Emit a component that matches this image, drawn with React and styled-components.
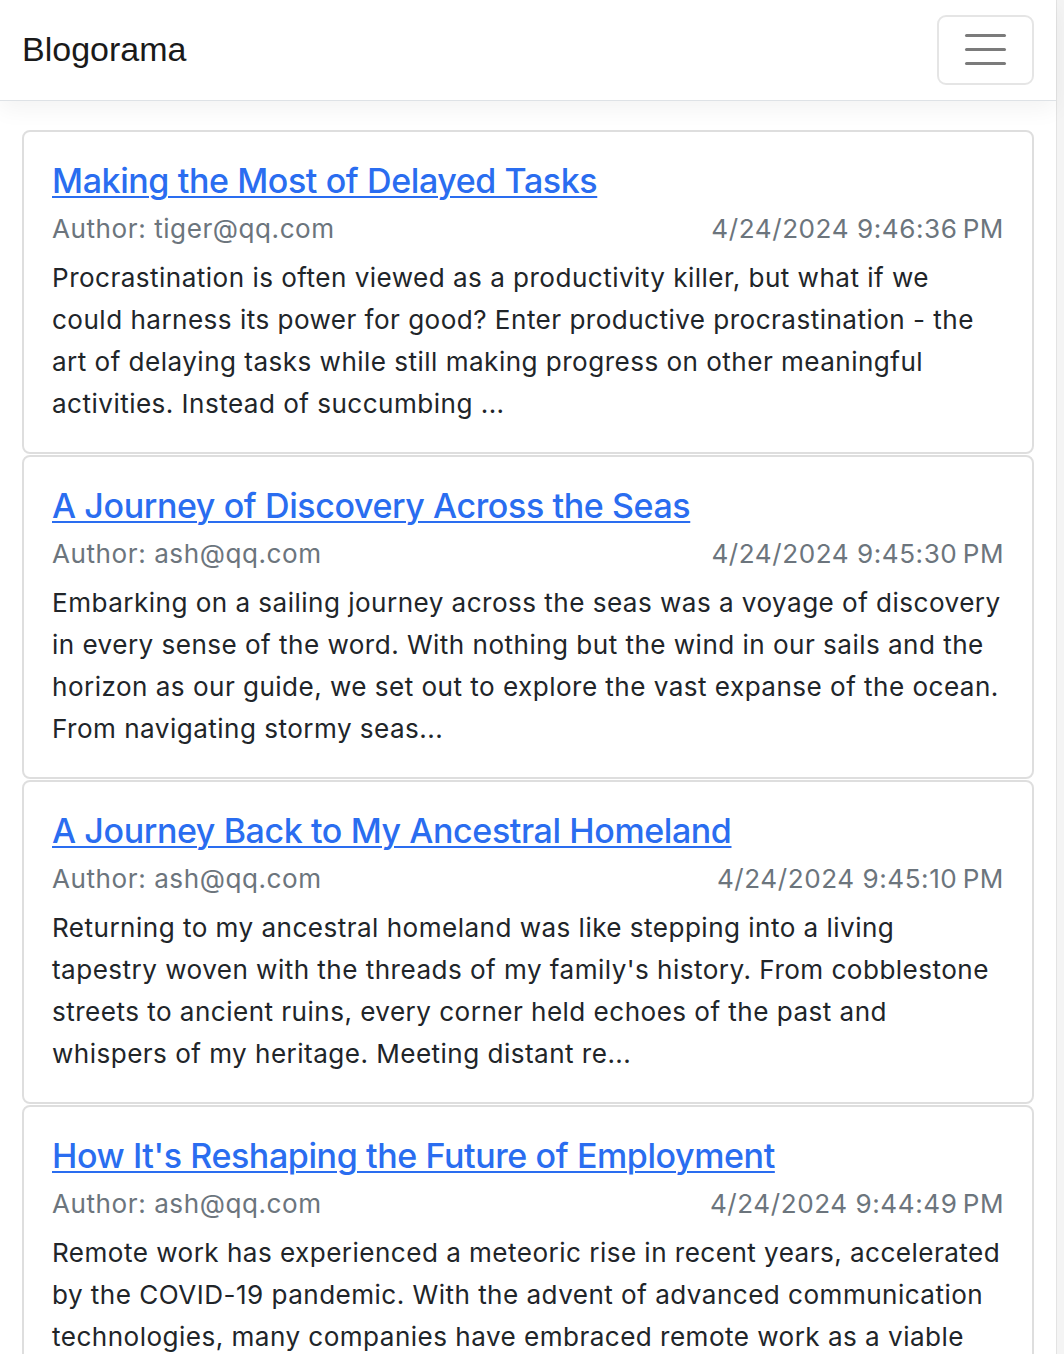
import React from "react";
import styled, {createGlobalStyle} from "styled-components";

const posts = [
  {
    id: 1,
    title: "Making the Most of Delayed Tasks",
    author: "tiger@qq.com",
    date: "4/24/2024 9:46:36\u202FPM",
    excerpt:
      "Procrastination is often viewed as a productivity killer, but what if we could harness its power for good? Enter productive procrastination - the art of delaying tasks while still making progress on other meaningful activities. Instead of succumbing ...",
  },
  {
    id: 2,
    title: "A Journey of Discovery Across the Seas",
    author: "ash@qq.com",
    date: "4/24/2024 9:45:30\u202FPM",
    excerpt:
      "Embarking on a sailing journey across the seas was a voyage of discovery in every sense of the word. With nothing but the wind in our sails and the horizon as our guide, we set out to explore the vast expanse of the ocean. From navigating stormy seas...",
  },
  {
    id: 3,
    title: "A Journey Back to My Ancestral Homeland",
    author: "ash@qq.com",
    date: "4/24/2024 9:45:10\u202FPM",
    excerpt:
      "Returning to my ancestral homeland was like stepping into a living tapestry woven with the threads of my family's history. From cobblestone streets to ancient ruins, every corner held echoes of the past and whispers of my heritage. Meeting distant re...",
  },
  {
    id: 4,
    title: "How It's Reshaping the Future of Employment",
    author: "ash@qq.com",
    date: "4/24/2024 9:44:49\u202FPM",
    excerpt:
      "Remote work has experienced a meteoric rise in recent years, accelerated by the COVID-19 pandemic. With the advent of advanced communication technologies, many companies have embraced remote work as a viable option for their teams...",
  },
];

const GlobalStyle = createGlobalStyle`
  html, body {
    margin: 0;
    padding: 0;
    background: #fff;
  }
  body {
    font-family: Inter, "Noto Sans", sans-serif;
    color: #212529;
    overflow: hidden;
  }
  * {
    box-sizing: border-box;
  }
`;

function App() {
  return (
    <Shell>
      <GlobalStyle />
      <Page>
        <Navbar>
          <Brand href="#">Blogorama</Brand>
          <Toggler aria-label="Toggle navigation">
            <span />
            <span />
            <span />
          </Toggler>
        </Navbar>
        <Main>
          {posts.map((post) => (
            <Card key={post.id}>
              <Title href="#">{post.title}</Title>
              <Meta>
                <span>Author: {post.author}</span>
                <span>{post.date}</span>
              </Meta>
              <Excerpt>{post.excerpt}</Excerpt>
            </Card>
          ))}
        </Main>
      </Page>
      <ScrollTrack />
    </Shell>
  );
}

const Shell = styled.div`
  display: flex;
  width: 1064px;
  height: 1354px;
  overflow: hidden;
`;

const Page = styled.div`
  flex: 1;
  display: flex;
  flex-direction: column;
  min-width: 0;
`;

const Navbar = styled.nav`
  height: 101px;
  flex-shrink: 0;
  display: flex;
  align-items: center;
  justify-content: space-between;
  padding: 0 22px 0 22px;
  background: #fff;
  border-bottom: 1.5px solid #dee2e6;
  box-shadow: 0 8px 22px rgba(0, 0, 0, 0.05);
  position: relative;
  z-index: 1;
`;

const Brand = styled.a`
  font-family: "Liberation Sans", Arial, sans-serif;
  font-size: 34px;
  color: #1a1a1a;
  text-decoration: none;
  margin-top: -2px;
`;

const Toggler = styled.button`
  width: 97px;
  height: 70px;
  border: 2px solid rgba(0, 0, 0, 0.1);
  border-radius: 9px;
  background: transparent;
  display: flex;
  flex-direction: column;
  justify-content: center;
  align-items: center;
  gap: 10.5px;
  padding: 0;
  margin-top: -1px;
  span {
    display: block;
    width: 41px;
    height: 3.5px;
    border-radius: 2px;
    background: #7b7b7b;
  }
`;

const Main = styled.main`
  padding: 29px 22px 0 22px;
  display: flex;
  flex-direction: column;
  gap: 1px;
`;

const Card = styled.article`
  border: 2px solid rgba(0, 0, 0, 0.13);
  border-radius: 8px;
  padding: 28px 28px 27px 28px;
  display: flex;
  flex-direction: column;
  flex-shrink: 0;
`;

const Title = styled.a`
  font-size: 34px;
  font-weight: 500;
  line-height: 42px;
  color: #2a6df0;
  text-decoration: underline;
  text-decoration-thickness: 1.75px;
  text-underline-offset: 3px;
  margin-bottom: 6px;
  align-self: flex-start;
  letter-spacing: -0.4px;
`;

const Meta = styled.div`
  display: flex;
  justify-content: space-between;
  font-size: 26.1px;
  line-height: 42px;
  color: #6c757d;
  letter-spacing: 0.55px;
`;

const Excerpt = styled.p`
  margin: 7px 0 0 0;
  font-size: 26.1px;
  line-height: 42px;
  color: #212529;
  letter-spacing: 0.46px;
`;

const ScrollTrack = styled.div`
  width: 8px;
  flex-shrink: 0;
  background: #f4f4f4;
  border-left: 1px solid #e3e3e3;
`;

export default App;
